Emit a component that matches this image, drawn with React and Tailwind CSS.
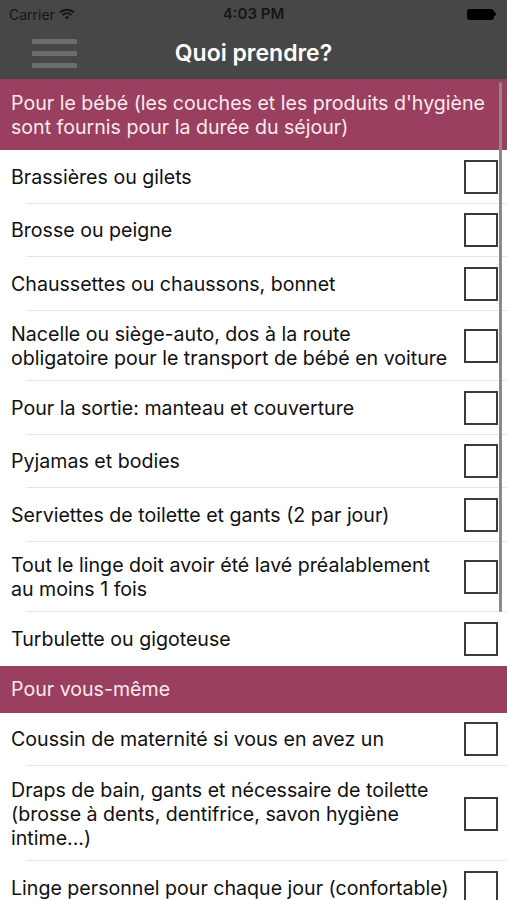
import React from 'react';

const babyItems = [
  ['Brassières ou gilets'],
  ['Brosse ou peigne'],
  ['Chaussettes ou chaussons, bonnet'],
  ['Nacelle ou siège-auto, dos à la route', 'obligatoire pour le transport de bébé en voiture'],
  ['Pour la sortie: manteau et couverture'],
  ['Pyjamas et bodies'],
  ['Serviettes de toilette et gants (2 par jour)'],
  ['Tout le linge doit avoir été lavé préalablement', 'au moins 1 fois'],
  ['Turbulette ou gigoteuse'],
];

const selfItems = [
  ['Coussin de maternité si vous en avez un'],
  ['Draps de bain, gants et nécessaire de toilette', '(brosse à dents, dentifrice, savon hygiène', 'intime...)'],
  ['Linge personnel pour chaque jour (confortable)'],
];

function Row({ lines, last }) {
  const h = lines.length === 1 ? 'h-[53.5px]' : lines.length === 2 ? 'h-[70.5px]' : 'h-[95px]';
  return (
    <div className={`relative flex items-center pl-[11px] pr-[9px] ${h}`}>
      <div className="flex-1 text-[19.6px] leading-[24px] text-[#111]">
        {lines.map((l, i) => (
          <div key={i}>{l}</div>
        ))}
      </div>
      <div className="w-[34px] h-[34px] border-2 border-[#3a3a3a] shrink-0"></div>
      {!last && <div className="absolute left-[26px] right-0 bottom-0 h-px bg-[#e6e6e6]"></div>}
    </div>
  );
}

function Section({ children }) {
  return (
    <div className="bg-[#9a3f5f] text-[#f7e9ee] text-[19.6px] leading-[24px] px-[11px] py-[11.5px]">
      {children}
    </div>
  );
}

export default function App() {
  return (
    <div className="w-[507px] h-[900px] overflow-hidden bg-white relative" style={{ fontFamily: 'Inter, "Liberation Sans", Arial, sans-serif' }}>
      {/* status bar */}
      <div className="bg-[#474747] h-[28px] flex items-center px-[9px] text-[14px] text-[#161616] relative">
        <span>Carrier</span>
        <svg width="16" height="12" viewBox="0 0 16 12" className="ml-[4px]">
          <path d="M1 4.5 A10 10 0 0 1 15 4.5" stroke="#161616" strokeWidth="2" fill="none" />
          <path d="M3.8 7 A6.2 6.2 0 0 1 12.2 7" stroke="#161616" strokeWidth="2" fill="none" />
          <path d="M8 11.5 L5.8 9.2 A3.2 3.2 0 0 1 10.2 9.2 Z" fill="#161616" />
        </svg>
        <span className="absolute left-0 right-0 text-center text-[15px] font-semibold pointer-events-none">4:03 PM</span>
        <div className="ml-auto flex items-center mr-[2px]">
          <div className="w-[27px] h-[11px] rounded-[3px] bg-black"></div>
          <div className="w-[2px] h-[4px] bg-black rounded-r-sm"></div>
        </div>
      </div>
      {/* nav bar */}
      <div className="bg-[#474747] h-[51px] flex items-center relative">
        <div className="ml-[32px] flex flex-col gap-[7px]">
          <div className="w-[45px] h-[5px] bg-[#6d6d6d] rounded-[1px]"></div>
          <div className="w-[45px] h-[5px] bg-[#6d6d6d] rounded-[1px]"></div>
          <div className="w-[45px] h-[5px] bg-[#6d6d6d] rounded-[1px]"></div>
        </div>
        <div className="absolute inset-0 flex items-center justify-center text-white text-[23px] font-semibold pointer-events-none">
          Quoi prendre?
        </div>
      </div>
      {/* list */}
      <div className="relative">
        <Section>
          Pour le bébé (les couches et les produits d'hygiène
          <br />
          sont fournis pour la durée du séjour)
        </Section>
        {babyItems.map((l, i) => (
          <Row key={i} lines={l} last={i === babyItems.length - 1} />
        ))}
        <Section>Pour vous-même</Section>
        {selfItems.map((l, i) => (
          <Row key={i} lines={l} />
        ))}
        <div className="absolute right-[5px] top-[3px] w-[3px] h-[530px] rounded-full bg-[#8a8a8a]"></div>
      </div>
    </div>
  );
}
